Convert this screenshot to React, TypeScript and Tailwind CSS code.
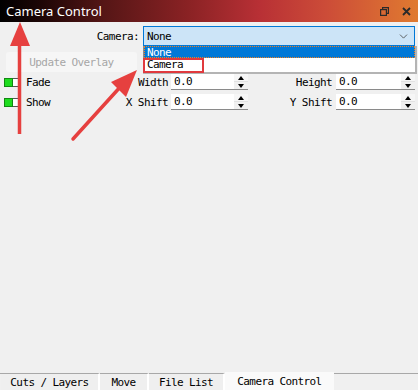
import { ChevronDown } from 'lucide-react';

const mono = "font-['DejaVu_Sans_Mono',monospace] text-[11px] tracking-[-0.6px] leading-none";

function Toggle() {
  return (
    <div className="flex h-[9px] w-[15px]">
      <div className="w-[10px] h-full bg-[#1fdc1f] border border-[#128a12]" />
      <div className="w-[6px] h-full bg-white border border-l-0 border-[#555]" />
    </div>
  );
}

function Spin() {
  return (
    <div className="w-[14px] h-full flex flex-col bg-[#f0f0f0] border-b border-[#8a8a8a]">
      <div className="flex-1 flex items-center justify-center border-b border-[#e2e2e2] bg-white/40">
        <div className="w-0 h-0 border-l-[3px] border-r-[3px] border-b-[4px] border-l-transparent border-r-transparent border-b-black" />
      </div>
      <div className="flex-1 flex items-center justify-center">
        <div className="w-0 h-0 border-l-[3px] border-r-[3px] border-t-[4px] border-l-transparent border-r-transparent border-t-black" />
      </div>
    </div>
  );
}

function Field({ w }: { w: string }) {
  return (
    <div className="flex h-[16px]">
      <div className={`${w} h-full bg-white border-b border-[#8a8a8a] flex items-center pl-[3px] text-black ${mono}`}>0.0</div>
      <Spin />
    </div>
  );
}

function Row({ check, left, right }: { check: string; left: string; right: string }) {
  return (
    <div className="flex items-center h-[16px] text-black">
      <div className="w-[100px] flex items-center pl-[4px] gap-[7px]">
        <Toggle />
        <span className={mono}>{check}</span>
      </div>
      <div className={`w-[68px] text-right ${mono}`}>{left}</div>
      <div className="ml-[3px]">
        <Field w="w-[63px]" />
      </div>
      <div className={`w-[84px] text-right ${mono}`}>{right}</div>
      <div className="ml-[4px]">
        <Field w="w-[65px]" />
      </div>
    </div>
  );
}

export default function App() {
  const tabs = [
    { t: 'Cuts / Layers', w: 'w-[99px]' },
    { t: 'Move', w: 'w-[49px]' },
    { t: 'File List', w: 'w-[76px]' },
  ];
  return (
    <div className="w-[418px] h-[390px] bg-[#f0f0f0] flex flex-col relative overflow-hidden text-black">
      <div className="h-[22px] shrink-0 flex items-center justify-between bg-[linear-gradient(to_right,#000_0%,#1e0606_10%,#561616_25%,#8a2224_45%,#b83035_62%,#cc4c38_78%,#e07a30_100%)]">
        <span className="pl-[6px] text-white text-[13px] font-['Noto_Sans',sans-serif] leading-none">Camera Control</span>
        <div className="flex items-center gap-[13px] pr-[7px]">
          <svg width="9" height="9" viewBox="0 0 9 9" fill="none" stroke="#2a2a2a" strokeWidth="1.2">
            <rect x="0.6" y="2.6" width="5.8" height="5.8" />
            <path d="M2.6 2.6V0.6H8.4V6.4H6.4" />
          </svg>
          <svg width="9" height="9" viewBox="0 0 9 9" stroke="#2a2a2a" strokeWidth="1.8">
            <path d="M1 1L8 8M8 1L1 8" />
          </svg>
        </div>
      </div>

      <div className="flex-1 flex flex-col">
        <div className="flex items-center mt-[4px] h-[20px]">
          <div className={`w-[139px] text-right ${mono}`}>Camera:</div>
          <div className={`ml-[4px] w-[272px] h-full bg-[#cce4f7] border border-[#0078d7] flex items-center justify-between pl-[3px] pr-[4px] ${mono}`}>
            <span>None</span>
            <ChevronDown size={13} strokeWidth={1.5} className="text-[#444]" />
          </div>
        </div>

        <div className="mt-[6px] ml-[6px] w-[131px] h-[20px] rounded-[3px] bg-[#f6f6f6] flex items-center justify-center">
          <span className={`${mono} text-[#a6a6a6]`}>Update Overlay</span>
        </div>

        <div className="mt-[2px] flex flex-col gap-[4px]">
          <Row check="Fade" left="Width" right="Height" />
          <Row check="Show" left="X Shift" right="Y Shift" />
        </div>
      </div>

      <div className="h-[18px] shrink-0 flex items-end">
        <div className="w-[1px] h-[17px] border-t border-[#a8a8a8]" />
        {tabs.map(({ t, w }) => (
          <div key={t} className={`${w} h-[17px] border-t border-[#a8a8a8] border-r-2 border-r-white bg-[#efefef] flex items-center justify-center ${mono}`}>
            {t}
          </div>
        ))}
        <div className={`h-[18px] w-[109px] bg-[#fafafa] flex items-center justify-center pt-[1px] ${mono}`}>Camera Control</div>
        <div className="flex-1 h-[17px] border-t border-[#a8a8a8]" />
      </div>

      {/* open combo list */}
      <div className="absolute left-[143px] top-[46px] w-[274px] h-[28px] bg-[#b4b4b4] pr-[2px] pb-[2px]">
        <div className="w-full h-full bg-white flex flex-col border-l border-[#8a8a8a]">
          <div className={`h-[12px] bg-[#0078d7] text-white flex items-center pl-[3px] outline-1 outline-dotted outline-[#f08020] -outline-offset-1 ${mono}`}>None</div>
          <div className={`h-[13px] flex items-center pl-[3px] ${mono}`}>Camera</div>
        </div>
      </div>
      <div className="absolute left-[143px] top-[58px] w-[61px] h-[15px] border-2 border-[#e03a3e]" />

      <svg className="absolute inset-0 pointer-events-none" width="418" height="390">
        <line x1="19.5" y1="134" x2="19.5" y2="42" stroke="#e6403f" strokeWidth="3.5" />
        <polygon points="20,22 10,46 30,46" fill="#e6403f" />
        <line x1="73" y1="139" x2="122" y2="85" stroke="#e6403f" strokeWidth="3.5" strokeLinecap="round" />
        <polygon points="137,70 111,82 126,97" fill="#e6403f" />
      </svg>
    </div>
  );
}
